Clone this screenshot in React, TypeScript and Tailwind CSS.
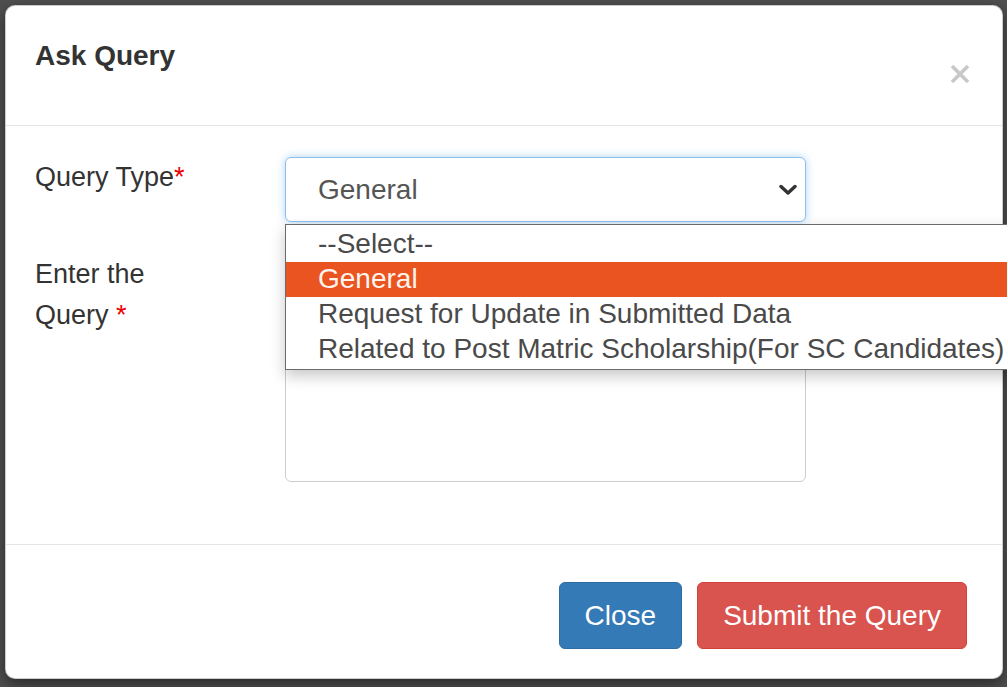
import React from "react";

export default function App() {
  const options = [
    "--Select--",
    "General",
    "Request for Update in Submitted Data",
    "Related to Post Matric Scholarship(For SC Candidates)",
  ];
  return (
    <div
      className="w-[1007px] h-[687px] overflow-hidden bg-[#505050] p-[5px]"
      style={{ fontFamily: '"Liberation Sans", Arial, sans-serif' }}
    >
      <div className="w-[998px] h-[674px] bg-white rounded-[10px] border border-black/20 shadow-[0_5px_15px_rgba(0,0,0,0.5)] flex flex-col">
        {/* Header */}
        <div className="h-[120px] shrink-0 flex justify-between items-start pt-[34px] pl-[29px] pr-[32px] border-b border-[#e5e5e5]">
          <h4 className="text-[28px] leading-[32px] font-bold text-[#333]">Ask Query</h4>
          <svg className="mt-[24px]" width="20" height="20" viewBox="0 0 20 20">
            <path d="M2 2 L18 18 M18 2 L2 18" stroke="#c8c8c8" strokeWidth="3.6" strokeLinecap="butt" />
          </svg>
        </div>

        {/* Body */}
        <div className="shrink-0 h-[418px] pt-[31px] pl-[29px] flex flex-col">
          <div className="flex items-start">
            <div className="w-[250px] shrink-0">
              <label className="block max-w-[175px] text-[27px] leading-[41px] text-[#333]">
                Query Type<span className="text-[#e00]">*</span>
              </label>
            </div>
            <div className="relative">
              <div className="w-[521px] h-[65px] rounded-[6px] border border-[#8ec0e9] shadow-[0_0_8px_rgba(102,175,233,0.55)] flex items-center justify-between pl-[32px] pr-[8px] bg-white">
                <span className="text-[28px] leading-[32px] text-[#555]">General</span>
                <svg width="18" height="12" viewBox="0 0 18 12">
                  <path d="M2 2.5 L9 9 L16 2.5" fill="none" stroke="#333" strokeWidth="3.4" strokeLinecap="round" strokeLinejoin="round" />
                </svg>
              </div>
              {/* Dropdown list */}
              <div className="absolute z-10 left-0 top-[67px] w-[760px] bg-white border border-[#6b6b6b] py-[2px] shadow-[0_6px_14px_rgba(0,0,0,0.22)]">
                {options.map((o, i) => (
                  <div
                    key={o}
                    className={
                      "h-[35px] pl-[32px] text-[28px] leading-[33px] whitespace-nowrap " +
                      (i === 1 ? "bg-[#e95420] text-[#fff4ee]" : "text-[#4a4a4a]")
                    }
                  >
                    {o}
                  </div>
                ))}
              </div>
            </div>
          </div>

          <div className="flex items-start mt-[28px]">
            <div className="w-[250px] shrink-0 pt-[4px]">
              <label className="block text-[27px] leading-[41px] text-[#333]">
                <div>Enter the</div>
                <div>
                  Query <span className="text-[#e00]">*</span>
                </div>
              </label>
            </div>
            <div className="w-[521px] h-[232px] rounded-[6px] border border-[#ccc] bg-white" />
          </div>
        </div>

        {/* Footer */}
        <div className="flex-1 border-t border-[#e5e5e5] flex justify-end items-start gap-[15px] pt-[37px] pr-[35px]">
          <button className="h-[67px] px-[25px] rounded-[6px] bg-[#337ab7] border border-[#2e6da4] text-white text-[28px] leading-[32px]">
            Close
          </button>
          <button className="h-[67px] px-[25px] rounded-[6px] bg-[#d9534f] border border-[#d43f3a] text-white text-[28px] leading-[32px]">
            Submit the Query
          </button>
        </div>
      </div>
    </div>
  );
}
